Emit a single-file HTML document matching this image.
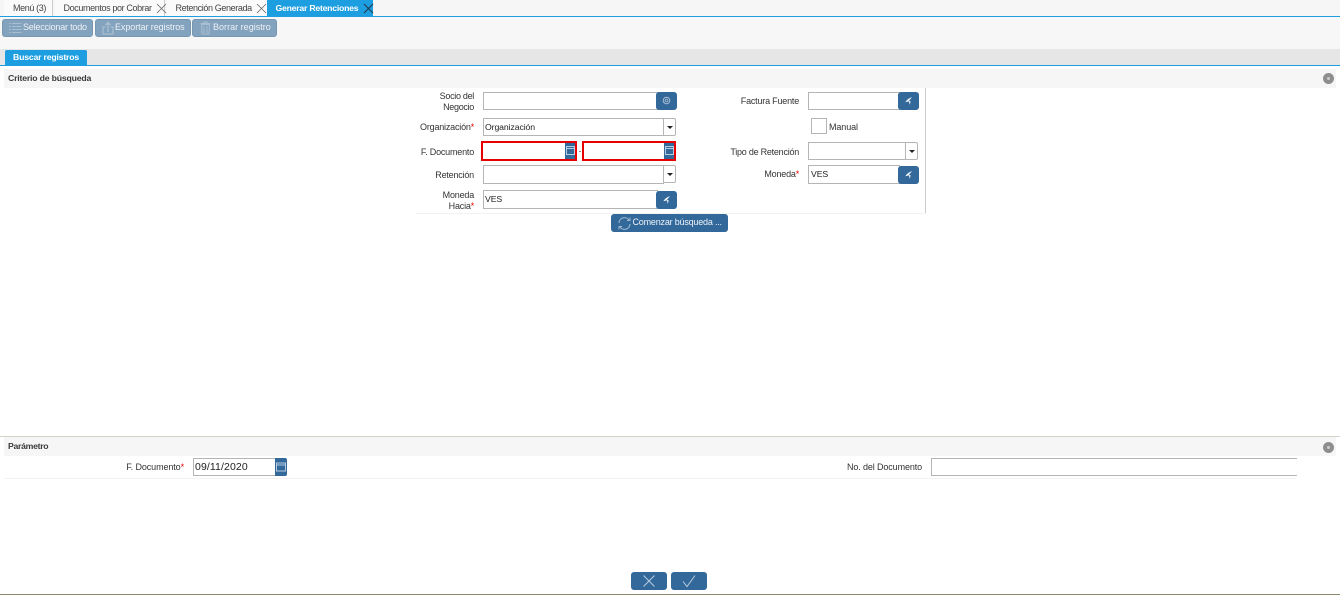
<!DOCTYPE html>
<html><head><meta charset="utf-8"><style>
html,body{margin:0;padding:0;background:#fff}
body{position:relative;width:1340px;height:595px;overflow:hidden;font-family:"Liberation Sans",sans-serif;font-size:9px;color:#333}
.a,.t,.i,.b,.l{position:absolute;box-sizing:border-box}
.t{white-space:nowrap;line-height:12px}
.tab{letter-spacing:-.38px}
.bd{font-weight:bold;font-size:8.7px;letter-spacing:-.19px}
.l{text-align:right;line-height:11px;color:#333;white-space:nowrap;letter-spacing:-.2px}
.l s{color:#e00;text-decoration:none}
.i{background:#fff;border:1px solid #b5b5b5;font-size:8.7px;line-height:16px;padding-left:1px;color:#222;letter-spacing:-.1px}
.b{background:#33689a;border-radius:3px}
.tb{background:#83a2bd;border-radius:3px;color:#eef2f6;line-height:15px;white-space:nowrap;height:18px;top:19px;border:1px solid #7696b2;position:absolute;box-sizing:border-box;letter-spacing:-.15px}
svg{position:absolute;overflow:visible}
</style></head><body>

<div class="a" style="left:0;top:0;width:1340px;height:16px;background:#f6f6f6"></div>
<div class="a" style="left:0;top:16px;width:1340px;height:1px;background:#1c9ee0"></div>
<div class="a" style="left:4px;top:0;width:49px;height:16px;background:#fafafa;border-right:1px solid #ccc"></div>
<div class="a" style="left:55px;top:0;width:110px;height:16px;background:#fafafa;border-right:1px solid #ccc"></div>
<div class="a" style="left:167px;top:0;width:99px;height:16px;background:#fafafa"></div>
<div class="a" style="left:267px;top:0;width:106px;height:16px;background:#1c9ee0"></div>
<div class="t tab" style="left:13px;top:2px;color:#444">Menú (3)</div>
<div class="t tab" style="left:63.5px;top:2px;color:#444">Documentos por Cobrar</div>
<div class="t tab" style="left:175.5px;top:2px;color:#444">Retención Generada</div>
<div class="t bd" style="left:275.5px;top:2px;color:#fff;letter-spacing:-.24px">Generar Retenciones</div>
<svg style="left:156px;top:3px" width="11" height="11"><path d="M1 1L10 10M10 1L1 10" stroke="#666" stroke-width=".8" fill="none"/></svg>
<svg style="left:256px;top:3px" width="11" height="11"><path d="M1 1L10 10M10 1L1 10" stroke="#666" stroke-width=".8" fill="none"/></svg>
<svg style="left:363px;top:3px" width="11" height="11"><path d="M1 1L10 10M10 1L1 10" stroke="#234" stroke-width=".9" fill="none"/></svg>

<div class="a" style="left:0;top:17px;width:1340px;height:32px;background:#f7f7f7"></div>
<div class="tb" style="left:2px;width:91px;padding-left:20px;letter-spacing:-.2px">Seleccionar todo</div>
<div class="tb" style="left:95px;width:96px;padding-left:19px;letter-spacing:-.08px">Exportar registros</div>
<div class="tb" style="left:192px;width:85px;padding-left:20px;letter-spacing:.02px">Borrar registro</div>
<svg style="left:9px;top:22px" width="13" height="12"><path d="M0 1.5H2M3 1.5H12.5M0 4.5H2M3 4.5H12.5M0 7.5H2M3 7.5H12.5M0 10.5H2M3 10.5H12.5" stroke="#a9bfd1" stroke-width="1" fill="none"/></svg>
<svg style="left:102px;top:21px" width="12" height="14"><path d="M3.5 6H1V13H11V6H8.5" stroke="#a9bfd1" stroke-width="1.2" fill="none"/><path d="M6 11V2M3.5 4L6 1.5L8.5 4" stroke="#a9bfd1" stroke-width="1.4" fill="none"/></svg>
<svg style="left:200px;top:21px" width="11" height="14"><path d="M0.5 2.5H10.5M4 2.5V1H7V2.5M1.5 3.5L2 13H9L9.5 3.5ZM4 5V12M7 5V12" stroke="#a9bfd1" stroke-width="1" fill="none"/></svg>

<div class="a" style="left:0;top:49px;width:1340px;height:16px;background:#e6e6e6"></div>
<div class="a" style="left:0;top:65px;width:1340px;height:1px;background:#1c9ee0"></div>
<div class="a" style="left:5px;top:50px;width:82px;height:15px;background:#1c9ee0;border-radius:2px 2px 0 0"></div>
<div class="t bd" style="left:13px;top:51px;color:#fff">Buscar registros</div>

<div class="a" style="left:4px;top:69px;width:1332px;height:19px;background:#f6f6f6"></div>
<div class="t bd" style="left:8px;top:72px;color:#3a3a3a">Criterio de búsqueda</div>
<div class="a" style="left:1323px;top:73px;width:11px;height:11px;border-radius:50%;background:#8e8e8e"></div>
<div class="a" style="left:1327px;top:77px;width:3px;height:3px;border-radius:50%;background:#ccc"></div>

<div class="a" style="left:416px;top:213px;width:510px;height:1px;background:#f2f2f2"></div>
<div class="a" style="left:925px;top:88px;width:1px;height:125px;background:#ccc"></div>

<!-- left col -->
<div class="l" style="right:866px;top:91px;letter-spacing:-.3px">Socio del<br>Negocio</div>
<div class="i" style="left:483px;top:92px;width:175px;height:18px"></div>
<div class="b" style="left:656px;top:92px;width:21px;height:18px"></div>
<svg style="left:662px;top:96px" width="9" height="9"><circle cx="4.5" cy="4.5" r="3.3" stroke="#a8c0d5" stroke-width="1" fill="none"/><circle cx="4.5" cy="4.5" r="1.4" stroke="#a8c0d5" stroke-width=".8" fill="none"/></svg>

<div class="l" style="right:866px;top:122px">Organización<s>*</s></div>
<div class="i" style="left:483px;top:118px;width:181px;height:18px">Organización</div>
<div class="i" style="left:663px;top:118px;width:13px;height:18px;border-radius:0 2px 2px 0"></div>
<div class="a" style="left:667px;top:126px;border-left:3px solid transparent;border-right:3px solid transparent;border-top:3px solid #222"></div>

<div class="l" style="right:866px;top:147px">F. Documento</div>
<div class="a" style="left:481px;top:141px;width:96px;height:20px;border:2px solid #e60000;background:#fff"></div>
<div class="a" style="left:565px;top:143px;width:10px;height:16px;background:#33689a"></div>
<svg style="left:566px;top:146px" width="9" height="9"><path d="M.5.5H8.5V8.5H.5ZM.5 2.5H8.5" stroke="#b8cde0" stroke-width="1" fill="none"/></svg>
<div class="a" style="left:579px;top:151px;width:2px;height:1px;background:#888"></div>
<div class="a" style="left:582px;top:141px;width:94px;height:20px;border:2px solid #e60000;background:#fff"></div>
<div class="a" style="left:664px;top:143px;width:10px;height:16px;background:#33689a"></div>
<svg style="left:665px;top:146px" width="9" height="9"><path d="M.5.5H8.5V8.5H.5ZM.5 2.5H8.5" stroke="#b8cde0" stroke-width="1" fill="none"/></svg>

<div class="l" style="right:866px;top:170px">Retención</div>
<div class="i" style="left:483px;top:165px;width:181px;height:19px"></div>
<div class="i" style="left:663px;top:165px;width:13px;height:18px;border-radius:0 2px 2px 0"></div>
<div class="a" style="left:667px;top:173px;border-left:3px solid transparent;border-right:3px solid transparent;border-top:3px solid #222"></div>

<div class="l" style="right:866px;top:190px">Moneda<br>Hacia<s>*</s></div>
<div class="i" style="left:483px;top:190px;width:175px;height:19px">VES</div>
<div class="b" style="left:656px;top:191px;width:21px;height:18px"></div>
<svg style="left:662px;top:195px" width="10" height="10"><path d="M8 1.2C5.4 1.9 2.6 3.6 1.4 6.2L5 5.4L5.6 8.6C6.5 7.8 6.2 6.2 6.6 5.2L4.9 4.9Z" fill="#eef3f7"/></svg>

<!-- right col -->
<div class="l" style="right:541px;top:96px">Factura Fuente</div>
<div class="i" style="left:808px;top:92px;width:92px;height:18px"></div>
<div class="b" style="left:898px;top:92px;width:21px;height:18px"></div>
<svg style="left:904px;top:96px" width="10" height="10"><path d="M8 1.2C5.4 1.9 2.6 3.6 1.4 6.2L5 5.4L5.6 8.6C6.5 7.8 6.2 6.2 6.6 5.2L4.9 4.9Z" fill="#eef3f7"/></svg>

<div class="a" style="left:811px;top:118px;width:16px;height:16px;border:1px solid #b5b5b5;background:#fff"></div>
<div class="t" style="left:829px;top:121px;letter-spacing:-.1px">Manual</div>

<div class="l" style="right:541px;top:147px;letter-spacing:-.24px">Tipo de Retención</div>
<div class="i" style="left:808px;top:142px;width:98px;height:18px"></div>
<div class="i" style="left:905px;top:142px;width:13px;height:18px;border-radius:0 2px 2px 0"></div>
<div class="a" style="left:909px;top:150px;border-left:3px solid transparent;border-right:3px solid transparent;border-top:3px solid #222"></div>

<div class="l" style="right:541px;top:169px">Moneda<s>*</s></div>
<div class="i" style="left:808px;top:165px;width:92px;height:19px;padding-left:2px">VES</div>
<div class="b" style="left:898px;top:166px;width:21px;height:18px"></div>
<svg style="left:904px;top:170px" width="10" height="10"><path d="M8 1.2C5.4 1.9 2.6 3.6 1.4 6.2L5 5.4L5.6 8.6C6.5 7.8 6.2 6.2 6.6 5.2L4.9 4.9Z" fill="#eef3f7"/></svg>

<!-- search button -->
<div class="b" style="left:611px;top:214px;width:117px;height:18px"></div>
<svg style="left:618px;top:217px" width="13" height="13"><path d="M1 6A5.5 5.5 0 0 1 11 3M12 7A5.5 5.5 0 0 1 2 10" stroke="#9fb9d0" stroke-width="1.1" fill="none"/><path d="M9 3.5H12V.5M4 9.5H1V12.5" stroke="#9fb9d0" stroke-width="1" fill="none"/></svg>
<div class="t" style="left:632.5px;top:216px;color:#eef3f8;letter-spacing:-.2px">Comenzar búsqueda ...</div>

<!-- parametro -->
<div class="a" style="left:0;top:436px;width:1340px;height:1px;background:#d2d2ca"></div>
<div class="a" style="left:4px;top:437px;width:1332px;height:19px;background:#f6f6f6"></div>
<div class="t bd" style="left:8px;top:440px;color:#3a3a3a;letter-spacing:-.3px">Parámetro</div>
<div class="a" style="left:1323px;top:442px;width:11px;height:11px;border-radius:50%;background:#8e8e8e"></div>
<div class="a" style="left:1327px;top:446px;width:3px;height:3px;border-radius:50%;background:#ccc"></div>

<div class="a" style="left:4px;top:478px;width:1292px;height:1px;background:#f3f3f3"></div>
<div class="l" style="right:1156px;top:462px;letter-spacing:-.1px">F. Documento<s>*</s></div>
<div class="i" style="left:193px;top:458px;width:83px;height:18px;font-size:10.5px;padding-left:1px;line-height:17px;letter-spacing:.1px">09/11/2020</div>
<div class="b" style="left:275px;top:458px;width:12px;height:18px;border-radius:0 2px 2px 0"></div>
<svg style="left:276px;top:462px" width="10" height="10"><path d="M.5 1H9.5V9H.5ZM.5 3H9.5" stroke="#b8cde0" stroke-width="1" fill="none"/></svg>

<div class="l" style="right:418px;top:462px;letter-spacing:-.12px">No. del Documento</div>
<div class="i" style="left:931px;top:458px;width:366px;height:18px;border-right:0"></div>

<!-- bottom -->
<div class="b" style="left:631px;top:572px;width:36px;height:18px"></div>
<svg style="left:642px;top:575px" width="14" height="12"><path d="M1.5 .5L12.5 11.5M12.5 .5L1.5 11.5" stroke="#b8cde0" stroke-width="1" fill="none"/></svg>
<div class="b" style="left:671px;top:572px;width:36px;height:18px"></div>
<svg style="left:682px;top:575px" width="14" height="12"><path d="M1 6.5L5 11.5L13 .5" stroke="#b8cde0" stroke-width="1" fill="none"/></svg>
<div class="a" style="left:0;top:594px;width:1340px;height:1px;background:#8f8a6e"></div>
</body></html>
